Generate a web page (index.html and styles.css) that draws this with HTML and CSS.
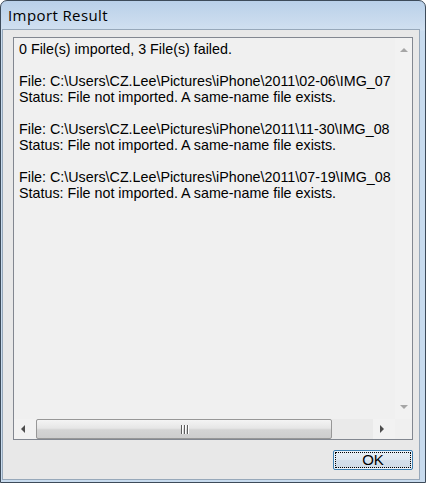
FILE: index.html
```html
<!DOCTYPE html>
<html>
<head>
<meta charset="utf-8">
<title>Import Result</title>
<link rel="stylesheet" href="styles.css">
</head>
<body>
<div class="window">
  <div class="titlebar">Import Result</div>
  <div class="client">
    <div class="textbox">
      <div class="content">0 File(s) imported, 3 File(s) failed.

File: C:\Users\CZ.Lee\Pictures\iPhone\2011\02-06\IMG_07
Status: File not imported. A same-name file exists.

File: C:\Users\CZ.Lee\Pictures\iPhone\2011\11-30\IMG_08
Status: File not imported. A same-name file exists.

File: C:\Users\CZ.Lee\Pictures\iPhone\2011\07-19\IMG_08
Status: File not imported. A same-name file exists.</div>
      <div class="vscroll">
        <span class="tri tri-up"></span>
        <span class="tri tri-down"></span>
      </div>
      <div class="hscroll">
        <div class="hbtn hbtn-left"><span class="tri tri-left"></span></div>
        <div class="htrack">
          <div class="thumb"><span class="grip"></span><span class="grip"></span><span class="grip"></span></div>
        </div>
        <div class="hbtn hbtn-right"><span class="tri tri-right"></span></div>
      </div>
      <div class="corner"></div>
    </div>
    <div class="footer">
      <button class="okbtn">OK</button>
    </div>
  </div>
</div>
</body>
</html>
```
FILE: styles.css
```css
html, body {
  margin: 0;
  padding: 0;
  background: #ffffff;
}

.window {
  width: 426px;
  height: 483px;
  box-sizing: border-box;
  border: 1px solid #3d4b5a;
  border-radius: 7px 7px 0 0;
  background: linear-gradient(to bottom, #b9d0e9 0px, #d1e0f0 29px, #c8dbee 30px, #c8dbee 100%);
  padding: 0 5px 2px 1px;
  display: flex;
  flex-direction: column;
}

.titlebar {
  height: 28px;
  flex: none;
  display: flex;
  align-items: center;
  padding-left: 6px;
  font-family: "Open Sans", "Liberation Sans", sans-serif;
  font-size: 15px;
  letter-spacing: 0.4px;
  color: #000;
}

.client {
  flex: 1;
  border: 1px solid #97a8ba;
  background: #e8e8e8;
  padding: 7px 6px 9px 10px;
  display: flex;
  flex-direction: column;
  min-height: 0;
}

.textbox {
  flex: 1;
  min-height: 0;
  border: 1px solid #828790;
  background: #f0f0f0;
  display: grid;
  grid-template-columns: 1fr 17px;
  grid-template-rows: 1fr 20px;
}

.content {
  overflow: hidden;
  white-space: pre;
  padding: 3px 0 0 5px;
  font-family: "Liberation Sans", Arial, sans-serif;
  font-size: 14.3px;
  line-height: 16px;
  color: #000;
}

.vscroll {
  background: #f2f2f2;
  display: flex;
  flex-direction: column;
  justify-content: space-between;
  align-items: center;
  padding: 10px 0 10px 0;
}

.tri {
  display: block;
  width: 0;
  height: 0;
}

.tri-up {
  border-left: 4px solid transparent;
  border-right: 4px solid transparent;
  border-bottom: 4px solid #a6a6a6;
}

.tri-down {
  border-left: 4px solid transparent;
  border-right: 4px solid transparent;
  border-top: 4px solid #a6a6a6;
}

.tri-left {
  border-top: 4px solid transparent;
  border-bottom: 4px solid transparent;
  border-right: 4px solid #4d4d4d;
}

.tri-right {
  border-top: 4px solid transparent;
  border-bottom: 4px solid transparent;
  border-left: 4px solid #4d4d4d;
}

.hscroll {
  display: flex;
  background: #f2f2f2;
}

.hbtn {
  width: 22px;
  flex: none;
  display: flex;
  align-items: center;
  padding-left: 7px;
  box-sizing: border-box;
}

.htrack {
  flex: 1;
  display: flex;
  background: #eaeaea;
}

.thumb {
  width: 296px;
  box-sizing: border-box;
  border: 1px solid #979797;
  border-radius: 2px;
  background: linear-gradient(to bottom, #f4f4f4 0%, #e6e6e6 45%, #d4d4d4 55%, #cdcdcd 100%);
  display: flex;
  justify-content: center;
  align-items: center;
  gap: 2px;
}

.grip {
  display: block;
  width: 1px;
  height: 9px;
  background: #5e5e5e;
  box-shadow: 1px 0 0 #ffffff;
}

.corner {
  background: #f0f0f0;
}

.footer {
  flex: none;
  margin-top: 10px;
  display: flex;
  justify-content: flex-end;
}

.okbtn {
  position: relative;
  width: 80px;
  height: 20px;
  margin: 0;
  padding: 0;
  border: 1px solid #3c7fb1;
  border-radius: 2px;
  background: linear-gradient(to bottom, #e9f0f6 0%, #dfe8f1 50%, #d3dfeb 51%, #cfdbe8 100%);
  box-shadow: inset 0 0 0 1px #eef4fa;
  font-family: "Liberation Sans", Arial, sans-serif;
  font-size: 15px;
  line-height: 18px;
  color: #000;
}

.okbtn::after {
  content: "";
  position: absolute;
  left: 1px;
  right: 1px;
  top: 1px;
  bottom: 1px;
  border: 1px dotted #000;
}
```
